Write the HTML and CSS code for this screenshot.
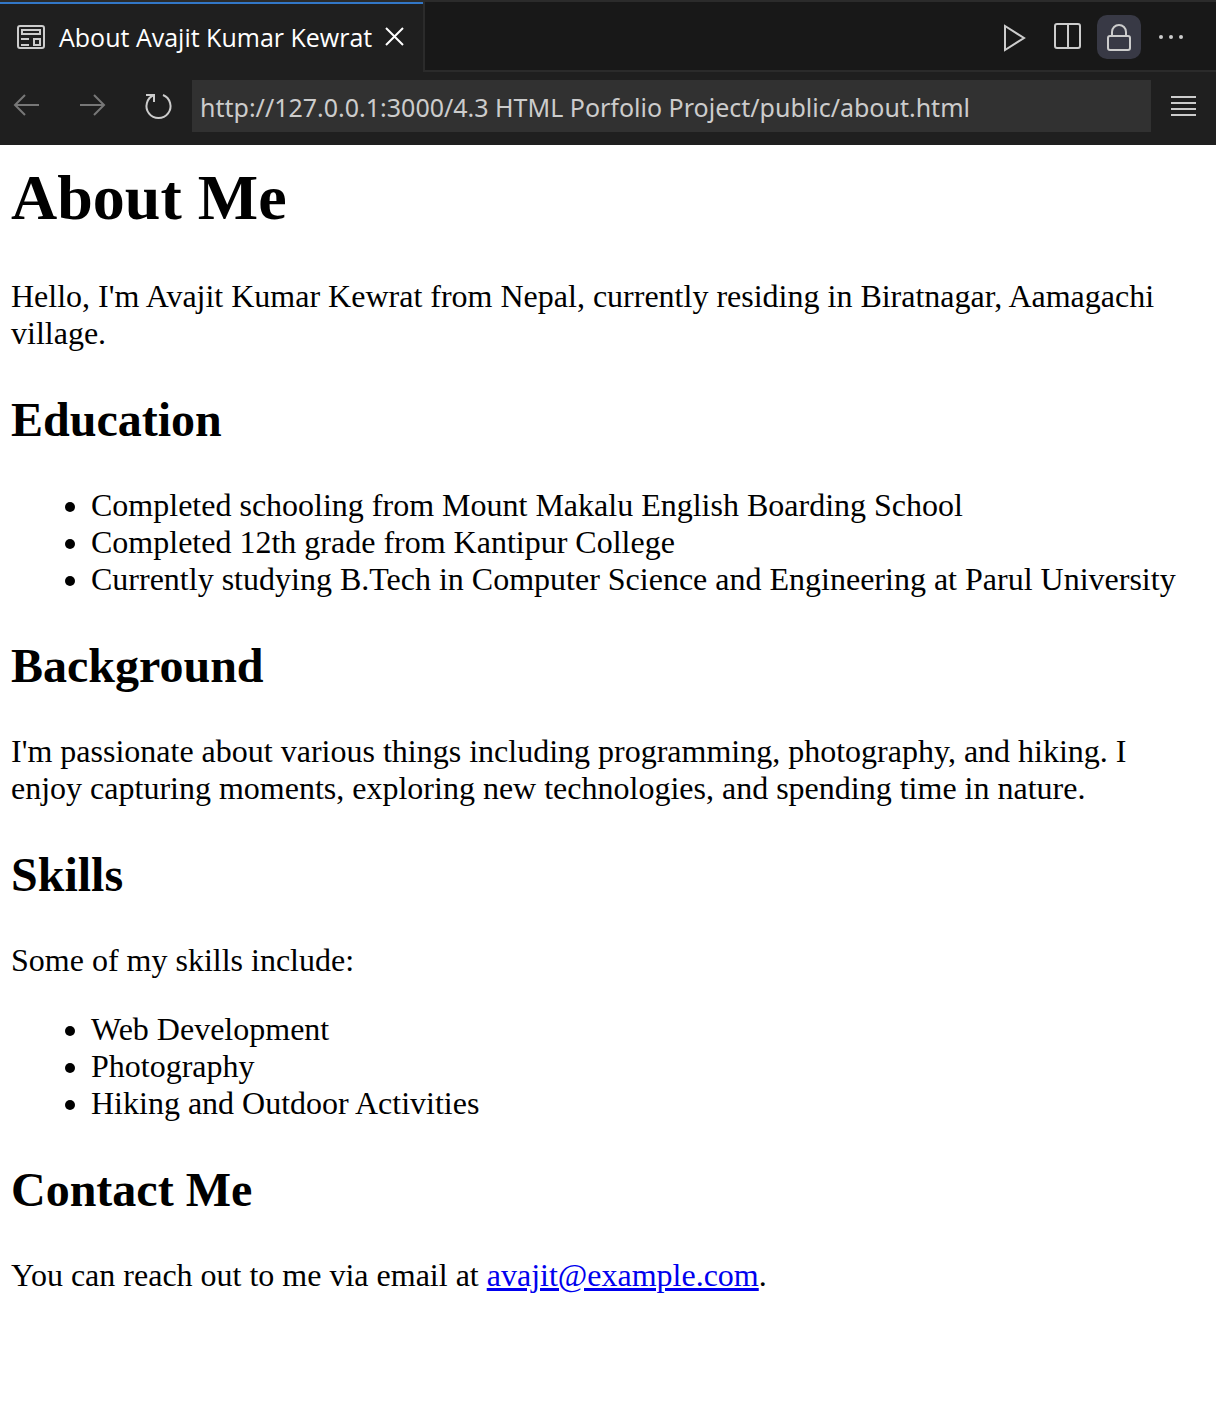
FILE: index.html
```html
<!DOCTYPE html>
<html lang="en">
<head>
<meta charset="utf-8">
<title>About Avajit Kumar Kewrat</title>
<link rel="stylesheet" href="styles.css">
</head>
<body>
<header class="chrome">
  <div class="tab-bar">
    <div class="tab">
      <svg class="icon" viewBox="0 0 32 32" aria-hidden="true"><rect x="3" y="5" width="26" height="22" rx="2"/><path d="M7 9h18v4H7zM6 18h8M6 24h8M19 18h6v6h-6z"/></svg>
      <span class="tab-title">About Avajit Kumar Kewrat</span>
      <button class="tab-close" type="button" aria-label="Close tab"><svg class="icon" viewBox="0 0 32 32"><path d="M7 7l17 17M24 7L7 24"/></svg></button>
    </div>
    <div class="actions">
      <button class="action" type="button" aria-label="Run"><svg class="icon" viewBox="0 0 32 32"><path d="M6 5v24l19-12z"/></svg></button>
      <button class="action" type="button" aria-label="Split editor"><svg class="icon" viewBox="0 0 32 32"><rect x="4" y="3" width="25" height="24" rx="2"/><path d="M17 3v24"/></svg></button>
      <button class="action action-active" type="button" aria-label="Unlock group"><svg class="icon" viewBox="0 0 32 32"><rect x="5" y="15" width="22" height="14" rx="2"/><path d="M9 15v-4a7 7 0 0 1 14 0v4"/></svg></button>
      <button class="action" type="button" aria-label="More actions"><svg class="icon icon-dots" viewBox="0 0 32 32"><circle cx="6" cy="16" r="2"/><circle cx="16" cy="16" r="2"/><circle cx="26" cy="16" r="2"/></svg></button>
    </div>
  </div>
  <div class="nav-bar">
    <button class="nav-button nav-muted" type="button" aria-label="Back"><svg class="icon" viewBox="0 0 32 32"><path d="M28 15H4M14 5L4 15l10 10"/></svg></button>
    <button class="nav-button nav-muted" type="button" aria-label="Forward"><svg class="icon" viewBox="0 0 32 32"><path d="M3 15h24M17 5l10 10-10 10"/></svg></button>
    <button class="nav-button" type="button" aria-label="Reload"><svg class="icon" viewBox="0 0 32 32"><path d="M20 5A12 12 0 1 1 11 5M3 5h8v7"/></svg></button>
    <input class="address" type="text" aria-label="Address" value="http://127.0.0.1:3000/4.3 HTML Porfolio Project/public/about.html">
    <button class="nav-button nav-menu" type="button" aria-label="Menu"><svg class="icon" viewBox="0 0 32 32"><path d="M3 7h25M3 13h25M3 19h25M3 25h25"/></svg></button>
  </div>
</header>
<main class="page">
  <h1>About Me</h1>
  <p>Hello, I'm Avajit Kumar Kewrat from Nepal, currently residing in Biratnagar, Aamagachi village.</p>
  <h2>Education</h2>
  <ul>
    <li>Completed schooling from Mount Makalu English Boarding School</li>
    <li>Completed 12th grade from Kantipur College</li>
    <li>Currently studying B.Tech in Computer Science and Engineering at Parul University</li>
  </ul>
  <h2>Background</h2>
  <p>I'm passionate about various things including programming, photography, and hiking. I enjoy capturing moments, exploring new technologies, and spending time in nature.</p>
  <h2>Skills</h2>
  <p>Some of my skills include:</p>
  <ul>
    <li>Web Development</li>
    <li>Photography</li>
    <li>Hiking and Outdoor Activities</li>
  </ul>
  <h2>Contact Me</h2>
  <p>You can reach out to me via email at <a href="mailto:avajit@example.com">avajit@example.com</a>.</p>
</main>
</body>
</html>
```
FILE: styles.css
```css
* { box-sizing: border-box; }
body {
  margin: 0;
  background: #fff;
  color: #000;
}
.chrome {
  background: #1f1f1f;
  color: #ccc;
  font-family: "Open Sans", "Noto Sans", sans-serif;
}
button {
  display: flex;
  align-items: center;
  justify-content: center;
  padding: 0;
  border: 0;
  background: none;
  color: inherit;
}
.icon {
  display: block;
  width: 32px;
  height: 32px;
  flex: none;
  fill: none;
  stroke: currentColor;
  stroke-width: 2;
}
.icon-dots { fill: currentColor; stroke: none; }
.tab-bar {
  display: flex;
  justify-content: space-between;
  height: 72px;
  border-top: 2px solid #2b2b2b;
  background: #181818;
  box-shadow: inset 0 -2px #2b2b2b;
}
.tab {
  display: flex;
  align-items: center;
  margin-top: -2px;
  padding: 2px 12px 0 15px;
  border-right: 2px solid #2b2b2b;
  background: #1f1f1f;
  box-shadow: inset 0 2px #2b2b2b, inset 0 4px #3277c7;
}
.tab-title {
  margin: 0 7px 0 12px;
  color: #fff;
  font-size: 25px;
  white-space: nowrap;
}
.tab-close { color: #fff; }
.actions {
  display: flex;
  align-items: center;
  gap: 8px;
  padding-right: 23px;
}
.action {
  width: 44px;
  height: 44px;
  border-radius: 10px;
}
.action-active { background: #383945; }
.nav-bar {
  display: flex;
  align-items: center;
  height: 73px;
  padding: 0 16px 5px 11px;
}
.nav-button { margin-right: 34px; }
.nav-muted { color: #777; }
.address {
  flex: 1;
  min-width: 0;
  height: 52px;
  margin-left: -17px;
  padding: 2px 8px 0;
  border: 0;
  background: #313131;
  color: #ccc;
  font: 25px "Noto Sans", "Open Sans", sans-serif;
}
.nav-menu { margin: 0 0 0 17px; }
.page {
  padding: 16px 11px;
  font-family: "Liberation Serif", "Times New Roman", serif;
  font-size: 32px;
  line-height: 37px;
}
h1 {
  margin: 0 0 43px;
  font-size: 64px;
  line-height: 74px;
}
h2 {
  margin: 40px 0;
  font-size: 48px;
  line-height: 55px;
}
p, ul { margin: 32px 0; }
ul { padding-left: 80px; }
a { color: #0000ee; }
```
